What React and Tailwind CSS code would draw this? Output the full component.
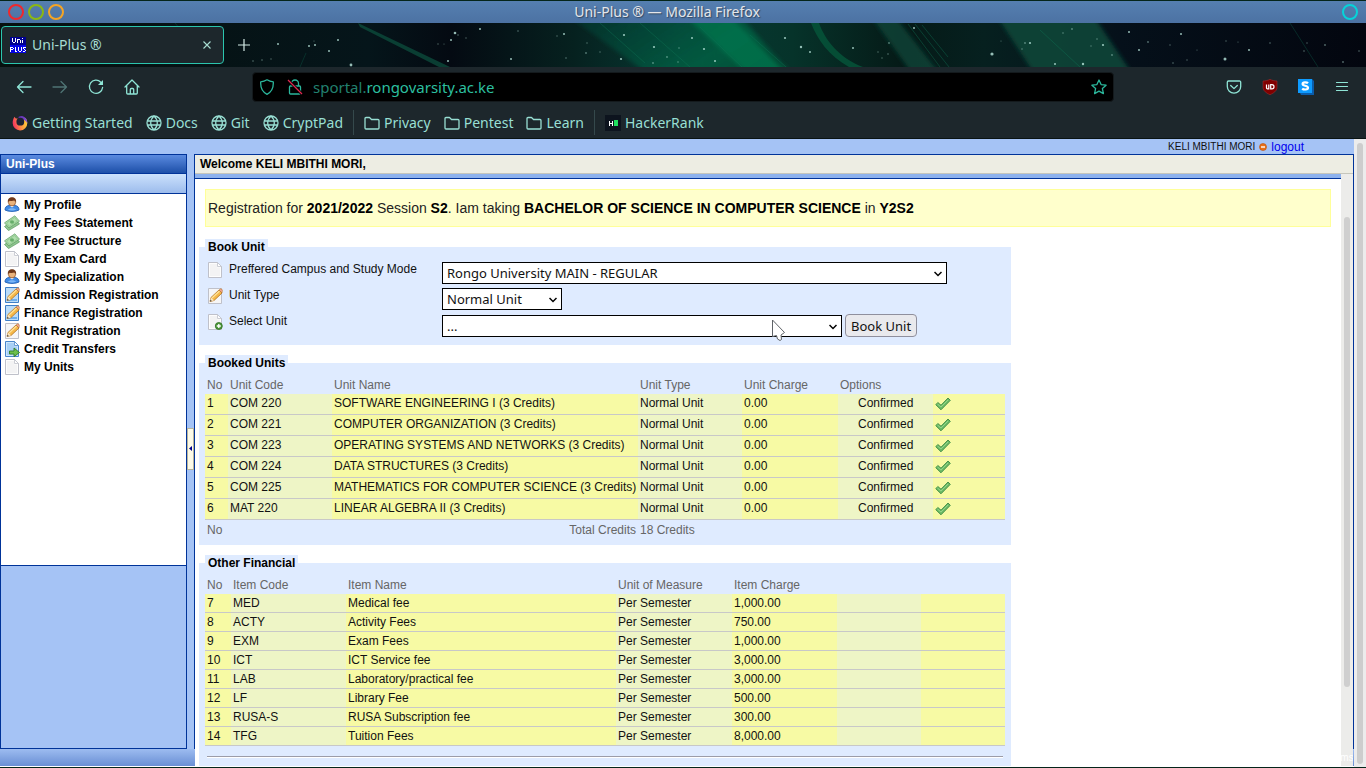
import React from 'react';

const UI = "font-['Noto_Sans',sans-serif]";

/* ---------- toolbar drawings ---------- */

function Wallpaper() {
  const stars = [
    [278, 44, 1], [309, 46, 1], [315, 45, 1], [314, 41, 0.6], [338, 40, 1], [329, 51, 1], [262, 60, 0.8], [271, 59, 0.7], [253, 61, 0.8], [351, 65, 1.4],
    [455, 33, 1.3], [458, 35, 0.8], [451, 40, 1], [466, 38, 0.7], [480, 29, 1], [438, 44, 0.7], [448, 61, 1], [444, 44, 0.6], [518, 31, 0.8], [511, 59, 1],
    [564, 34, 1], [557, 36, 0.7], [587, 43, 0.7], [586, 53, 0.9], [566, 58, 0.8], [600, 52, 0.7], [624, 35, 1.1], [621, 59, 1.1], [654, 47, 1.1], [667, 57, 0.9],
    [653, 63, 0.9], [678, 62, 0.8], [679, 48, 0.8], [692, 38, 1], [704, 49, 1.1], [715, 61, 1], [785, 38, 1.1], [801, 47, 1.2], [810, 52, 1], [853, 48, 1],
    [889, 43, 0.9], [878, 52, 0.7], [888, 54, 0.8], [882, 58, 0.7], [914, 28, 1], [992, 54, 1.6], [1001, 41, 0.6], [1025, 43, 0.9], [1030, 43, 1.1], [1022, 49, 0.8],
    [1063, 33, 0.8], [1072, 29, 0.9], [1055, 64, 1], [1083, 64, 1.2], [1097, 39, 0.8], [1103, 45, 1.1], [1091, 46, 0.7], [1112, 55, 0.9], [1129, 32, 1], [1139, 50, 1],
    [1148, 42, 0.9], [1170, 45, 0.7], [1181, 34, 1], [1197, 50, 0.6], [1225, 59, 1.5], [1226, 41, 0.7], [1238, 42, 0.6], [1249, 50, 1], [1270, 43, 0.8], [1304, 51, 0.8],
    [1307, 43, 0.7], [1325, 45, 0.9], [1343, 62, 0.9], [1359, 51, 0.8], [1173, 63, 0.8], [1187, 60, 0.7],
  ];
  return (
    <svg aria-hidden="true" className="absolute inset-0 h-full w-full" viewBox="0 23 1366 44" preserveAspectRatio="none">
      <defs>
        <linearGradient id="sky" x1="0" x2="1" y1="0" y2="0">
          <stop offset="0" stopColor="#06100f" />
          <stop offset="0.27" stopColor="#05151a" />
          <stop offset="0.33" stopColor="#040a12" />
          <stop offset="0.42" stopColor="#06211f" />
          <stop offset="0.5" stopColor="#073a34" />
          <stop offset="0.58" stopColor="#06332a" />
          <stop offset="0.66" stopColor="#051a17" />
          <stop offset="0.72" stopColor="#06201f" />
          <stop offset="0.82" stopColor="#05101a" />
          <stop offset="1" stopColor="#03060f" />
        </linearGradient>
        <linearGradient id="beam" x1="0" x2="1" y1="0" y2="0.4">
          <stop offset="0" stopColor="#0a4a3c" stopOpacity="0.4" />
          <stop offset="0.8" stopColor="#056544" />
          <stop offset="1" stopColor="#04583b" />
        </linearGradient>
        <filter id="soft" x="-10%" y="-30%" width="120%" height="160%">
          <feGaussianBlur stdDeviation="2" />
        </filter>
      </defs>
      <rect x="0" y="23" width="1366" height="44" fill="url(#sky)" />
      <path d="M358 23l92 44h-11l-79-40z" fill="#0d5340" opacity="0.7" />
      <g filter="url(#soft)">
        <path d="M567 15h172l54 60H650z" fill="url(#beam)" opacity="0.75" />
        <path d="M684 15h45l58 60h-38z" fill="#07774e" opacity="0.7" />
        <path d="M870 15h24l47 60h-28z" fill="#0a4a3c" opacity="0.7" />
        <path d="M996 15h97l40 60h-98z" fill="#09493b" opacity="0.85" />
      </g>
      <path d="M811 23c6 16 18 33 38 44h14c-24-9-38-27-44-44z" fill="#065a3c" opacity="0.75" />
      <path d="M922 25l26 32M908 24l32 43M915 24l34 43M1040 30l40 37M700 27l42 40M750 35l36 32M640 23l50 44M600 23l45 40" stroke="#107556" strokeWidth="1" opacity="0.4" />
      <path d="M300 67l6-14M175 23l5 6M1290 23l28 44" stroke="#0b4a3d" strokeWidth="1" opacity="0.5" />
      {stars.map(([x, y, r]) => (
        <circle key={x + '-' + y} cx={x} cy={y} r={r} fill="#b9e6dc" opacity={r > 0.9 ? 0.8 : 0.45} />
      ))}
    </svg>
  );
}

function Favicon() {
  return (
    <svg viewBox="0 0 16 16" className="h-4 w-4 shrink-0" shapeRendering="crispEdges" aria-hidden="true">
      <rect width="16" height="16" fill="#0404e6" />
      <rect width="16" height="8" fill="#000090" />
      <path d="M2 1h1v4h-1zM5 1h1v4h-1zM3 5h2v1h-2zM7 2h3v1h-3zM7 3h1v3h-1zM10 3h1v3h-1zM12 3h1v3h-1zM12 1h1v1h-1z" fill="#fff" />
      <path d="M0 10h3v1H0zM0 11h1v4H0zM3 11h1v1h-1zM1 12h2v1H1zM5 10h1v5h-1zM6 14h1v1h-1zM8 10h1v4h-1zM11 10h1v4h-1zM9 14h2v1h-2zM13 10h3v1h-3zM13 11h1v1h-1zM14 12h1v1h-1zM15 13h1v1h-1zM13 14h2v1h-2z" fill="#fff" />
    </svg>
  );
}

const line = { fill: 'none', stroke: 'currentColor', strokeLinecap: 'round', strokeLinejoin: 'round' };

function BackIcon({ flip }) {
  return (
    <svg viewBox="0 0 16 16" className={flip ? 'h-4 w-4 -scale-x-100' : 'h-4 w-4'} aria-hidden="true">
      <path d="M15 8H1.500M7 2.500L1.500 8 7 13.500" {...line} strokeWidth="1.300" />
    </svg>
  );
}
function ReloadIcon() {
  return (
    <svg viewBox="0 0 16 16" className="h-4 w-4" aria-hidden="true">
      <path d="M12.800 3.200A6.600 6.600 0 1 0 14.600 8.500" {...line} strokeWidth="1.300" />
      <path d="M15 1v5h-5z" fill="currentColor" />
    </svg>
  );
}
function HomeIcon() {
  return (
    <svg viewBox="0 0 16 16" className="h-4 w-4" aria-hidden="true">
      <path d="M1 8l7-7 7 7M2.700 6.500v7.500a1 1 0 0 0 1 1h8.600a1 1 0 0 0 1-1V6.500M6.300 15v-4.500a1 1 0 0 1 1-1h1.400a1 1 0 0 1 1 1V15" {...line} strokeWidth="1.300" />
    </svg>
  );
}
function ShieldIcon() {
  return (
    <svg viewBox="0 0 16 16" className="h-4 w-4" aria-hidden="true">
      <path d="M8 .800c2 1.300 4 1.900 6.300 2.100C14.600 8.500 12.800 13 8 15.300 3.200 13 1.400 8.500 1.700 2.900 4 2.700 6 2.100 8 .800z" {...line} strokeWidth="1.300" />
    </svg>
  );
}
function LockIcon() {
  return (
    <svg viewBox="0 0 16 16" className="h-4 w-4" aria-hidden="true">
      <path d="M4.500 7V4.500a3.500 3.500 0 0 1 7 0V7M3.500 7h9a1 1 0 0 1 1 1v6a1 1 0 0 1-1 1h-9a1 1 0 0 1-1-1V8a1 1 0 0 1 1-1z" {...line} strokeWidth="1.300" />
      <path d="M1 1l14 14" stroke="#000" strokeWidth="3" />
      <path d="M1 1l14 14" stroke="#e22850" strokeWidth="1.300" />
    </svg>
  );
}
function StarIcon() {
  return (
    <svg viewBox="0 0 16 16" className="h-4 w-4" aria-hidden="true">
      <path d="M8 1l2.100 4.600 5 .600-3.700 3.400 1 5L8 12.100 3.600 14.600l1-5L.900 6.200l5-.600z" {...line} strokeWidth="1.300" />
    </svg>
  );
}
function PocketIcon() {
  return (
    <svg viewBox="0 0 16 16" className="h-4 w-4" aria-hidden="true">
      <path d="M2.500 2h11a1.200 1.200 0 0 1 1.200 1.200V7.500a6.700 6.700 0 0 1-13.400 0V3.200A1.200 1.200 0 0 1 2.500 2zM4.700 6.500L8 9.600l3.300-3.100" {...line} strokeWidth="1.300" />
    </svg>
  );
}
function UblockIcon() {
  return (
    <svg viewBox="0 0 16 16" className="h-4 w-4" aria-hidden="true">
      <path d="M8 .300C10 1.400 12.500 2 15 2v6.500c0 3.500-3.500 5.500-7 7.300-3.500-1.800-7-3.800-7-7.300V2c2.500 0 5-.600 7-1.700z" fill="#800000" stroke="#a33" strokeWidth="0.500" />
      <path d="M4.500 5.500v3.300a1 1 0 0 0 1 1h1.300V5.500M8.700 9.800V5.600h1.200a2.100 2.100 0 0 1 0 4.200z" fill="none" stroke="#fff" strokeWidth="1.200" />
    </svg>
  );
}
function StylusIcon() {
  return (
    <svg viewBox="0 0 16 16" className="h-4 w-4" aria-hidden="true">
      <path d="M2 14h12V0l2 2v14H3z" fill="#0a5cab" />
      <rect width="14" height="14" fill="#0e9bff" />
      <path d="M10 4.300C9 3.200 4.600 2.800 4.600 5c0 2.200 5.400 1.300 5.400 3.800 0 2.300-4.500 2-5.800.800" fill="none" stroke="#fff" strokeWidth="2.200" />
    </svg>
  );
}
function MenuIcon() {
  return (
    <svg viewBox="0 0 16 16" className="h-4 w-4" aria-hidden="true">
      <path d="M2.500 3.500h11M2.500 7.500h11M2.500 11.500h11" {...line} strokeWidth="1.200" />
    </svg>
  );
}
function GlobeIcon() {
  return (
    <svg viewBox="0 0 16 16" className="h-4 w-4" aria-hidden="true">
      <path d="M8 1a7 7 0 1 0 0 14A7 7 0 0 0 8 1zM8 1C3.600 5 3.600 11 8 15M8 1c4.400 4 4.400 10 0 14M1.300 6h13.400M1.300 10h13.400" {...line} strokeWidth="1.300" />
    </svg>
  );
}
function FolderIcon() {
  return (
    <svg viewBox="0 0 16 16" className="h-4 w-4" aria-hidden="true">
      <path d="M2 2.500h3.500l2 2H14a1 1 0 0 1 1 1V13a1 1 0 0 1-1 1H2a1 1 0 0 1-1-1V3.500a1 1 0 0 1 1-1z" {...line} strokeWidth="1.300" />
    </svg>
  );
}
function FirefoxIcon() {
  return (
    <svg viewBox="0 0 16 16" className="h-4 w-4" aria-hidden="true">
      <defs>
        <linearGradient id="fx" x1="0.9" y1="0.5" x2="0.1" y2="0.7">
          <stop offset="0" stopColor="#ffc23a" />
          <stop offset="0.4" stopColor="#ff9640" />
          <stop offset="1" stopColor="#f63a5e" />
        </linearGradient>
        <linearGradient id="fxTop" x1="0" y1="0" x2="1" y2="1">
          <stop offset="0" stopColor="#5b2ea6" />
          <stop offset="1" stopColor="#8f55ea" />
        </linearGradient>
      </defs>
      <path d="M2.800 1.700C1.200 3.400.600 5.600.700 8.200a7.300 7.300 0 0 0 14.600-.200c0-2-.700-3.800-1.900-5.100L6.600 4c-.400-.400-1.200-.600-2.200-.400C3.500 3.400 3.100 2.900 2.800 1.700z" fill="url(#fx)" />
      <path d="M6.500 1.900C9.500-.300 15.500 2 15.300 8.500 14 5 11 3.500 6.600 4z" fill="url(#fxTop)" />
      <circle cx="8.300" cy="6.700" r="3.900" fill="#1d2333" />
    </svg>
  );
}
function HackerRankIcon() {
  return (
    <svg viewBox="0 0 16 16" className="h-4 w-4" shapeRendering="crispEdges" aria-hidden="true">
      <rect width="16" height="16" fill="#0d141e" />
      <path d="M4 6h1v5h-1zM7 6h1v5h-1zM5 8h2v1h-2z" fill="#fff" />
      <rect x="9" y="5" width="4" height="6" fill="#1fe05f" />
    </svg>
  );
}

/* ---------- portal drawings ---------- */

function PersonIcon() {
  return (
    <svg viewBox="0 0 16 16" className="h-4 w-4 shrink-0" aria-hidden="true">
      <path d="M1 13c0-2.800 1.500-4.300 4-4.500h6c2.500.200 4 1.700 4 4.500-3 1.900-11 1.900-14 0z" fill="#3f8ae6" stroke="#1f5fb4" strokeWidth="0.900" />
      <path d="M4 12.800c.500-2 7.500-2 8 0-2 1-6 1-8 0z" fill="#7db6f5" />
      <path d="M5.500 8.500L8 10.500l2.500-2z" fill="#fff" />
      <circle cx="8" cy="5.300" r="3.600" fill="#eab37c" stroke="#8a4a20" strokeWidth="0.700" />
      <path d="M3.900 5.600C3.400 1.800 5.500.300 8 .300s4.600 1.500 4.100 5.300c-.600-1.300-.900-1.800-1.800-2.100-1.500.600-3.200.600-4.700.200-.900.400-1.200.900-1.700 1.900z" fill="#71391a" />
    </svg>
  );
}
function MoneyIcon() {
  return (
    <svg viewBox="0 0 16 16" className="h-4 w-4 shrink-0" aria-hidden="true">
      <path d="M.500 11.500L11 4l4.500 5L4.500 15.600z" fill="#8ec58e" stroke="#5a9a60" strokeWidth="0.700" />
      <path d="M.500 7.800L10.800.800l4.700 5.400L5 13z" fill="#b0deac" stroke="#5a9a60" strokeWidth="0.700" />
      <path d="M2.500 8l8-5.500L13.600 6 5.300 11.400z" fill="none" stroke="#86c286" strokeWidth="0.700" />
      <ellipse cx="8" cy="7" rx="2" ry="1.800" fill="#66ad6a" />
    </svg>
  );
}
function Sheet({ tone }) {
  const blue = tone === 'blue';
  return (
    <>
      <path d="M1.500 .500h9l4 4v11h-13z" fill={blue ? '#cfe6fb' : '#fdfdfd'} stroke={blue ? '#4a86cc' : '#bfc1ca'} />
      <path d="M3 2h7v3.500h3V14H3z" fill={blue ? '#a9d0f5' : '#f3f3f4'} />
      <path d="M10.500 .500v4h4z" fill="#fff" stroke={blue ? '#4a86cc' : '#bfc1ca'} strokeWidth="0.800" />
    </>
  );
}
function PageIcon() {
  return (
    <svg viewBox="0 0 16 16" className="h-4 w-4 shrink-0" aria-hidden="true">
      <Sheet />
    </svg>
  );
}
function EditIcon({ tone }) {
  return (
    <svg viewBox="0 0 16 16" className="h-4 w-4 shrink-0" aria-hidden="true">
      <path d="M1.500 .500h13v15h-13z" fill={tone === 'blue' ? '#bcdcf8' : '#f6f6f7'} stroke={tone === 'blue' ? '#3f7fc8' : '#bfc1ca'} />
      {tone === 'blue' && <path d="M3 12h10v2H3z" fill="#6fb0ee" />}
      <path d="M3 13.500l1-4 8-7.500 3 3-8 7.500z" fill="#f6b94a" stroke="#b06f1c" strokeWidth="0.800" />
      <path d="M5 10l7.500-7" stroke="#ffe39a" strokeWidth="1.200" />
      <path d="M12 2l1.200-1.100c1-.600 2.800 1 2.100 2.200L15 5z" fill="#f0a58f" stroke="#b06f1c" strokeWidth="0.500" />
      <path d="M3 13.500l1-4L7 12.500z" fill="#f9e6c4" />
      <path d="M3 13.500l.500-1.700 1.300 1.200z" fill="#333" />
    </svg>
  );
}
function PageAddIcon() {
  return (
    <svg viewBox="0 0 16 16" className="h-4 w-4 shrink-0" aria-hidden="true">
      <Sheet />
      <circle cx="11.800" cy="12" r="3.500" fill="#4f9a3a" stroke="#2f6f22" strokeWidth="0.800" />
      <path d="M11.800 10v4M9.800 12h4" stroke="#fff" strokeWidth="1.300" />
    </svg>
  );
}
function PageGoIcon() {
  return (
    <svg viewBox="0 0 16 16" className="h-4 w-4 shrink-0" aria-hidden="true">
      <Sheet tone="blue" />
      <path d="M5.500 10h4.500V7l5.500 4.500L10 15.700V13H5.500z" fill="#6cbf4b" stroke="#2f7d28" strokeWidth="0.900" />
    </svg>
  );
}
function TickIcon() {
  return (
    <svg viewBox="0 0 16 16" className="h-4 w-4" role="img" aria-label="Confirmed">
      <path d="M.800 8.700l2-2.200L6 9.200 13 2l2.300 2.300L6 13.800z" fill="#6cbc64" stroke="#3b8a44" strokeWidth="0.900" strokeLinejoin="round" />
      <path d="M2.500 8l3.500 3L13 4" fill="none" stroke="#a0dc95" strokeWidth="0.800" />
    </svg>
  );
}
function Chevron() {
  return (
    <svg viewBox="0 0 8 6" className="pointer-events-none absolute top-[9px] right-[5px] h-1.5 w-2" aria-hidden="true">
      <path d="M.500 1L4 4.500 7.500 1" fill="none" stroke="#000" strokeWidth="1.500" />
    </svg>
  );
}

/* ---------- data ---------- */

const bookmarks = [
  [['Getting Started', FirefoxIcon], ['Docs', GlobeIcon], ['Git', GlobeIcon], ['CryptPad', GlobeIcon]],
  [['Privacy', FolderIcon], ['Pentest', FolderIcon], ['Learn', FolderIcon]],
  [['HackerRank', HackerRankIcon]],
];

const menu = [
  ['My Profile', <PersonIcon />],
  ['My Fees Statement', <MoneyIcon />],
  ['My Fee Structure', <MoneyIcon />],
  ['My Exam Card', <PageIcon />],
  ['My Specialization', <PersonIcon />],
  ['Admission Registration', <EditIcon tone="blue" />],
  ['Finance Registration', <EditIcon tone="blue" />],
  ['Unit Registration', <EditIcon />],
  ['Credit Transfers', <PageGoIcon />],
  ['My Units', <PageIcon />],
];

const units = [
  ['COM 220', 'SOFTWARE ENGINEERING I (3 Credits)'],
  ['COM 221', 'COMPUTER ORGANIZATION (3 Credits)'],
  ['COM 223', 'OPERATING SYSTEMS AND NETWORKS (3 Credits)'],
  ['COM 224', 'DATA STRUCTURES (3 Credits)'],
  ['COM 225', 'MATHEMATICS FOR COMPUTER SCIENCE (3 Credits)'],
  ['MAT 220', 'LINEAR ALGEBRA II (3 Credits)'],
];

const fees = [
  ['MED', 'Medical fee', '1,000.00'],
  ['ACTY', 'Activity Fees', '750.00'],
  ['EXM', 'Exam Fees', '1,000.00'],
  ['ICT', 'ICT Service fee', '3,000.00'],
  ['LAB', 'Laboratory/practical fee', '3,000.00'],
  ['LF', 'Library Fee', '500.00'],
  ['RUSA-S', 'RUSA Subscription fee', '300.00'],
  ['TFG', 'Tuition Fees', '8,000.00'],
];

/* ---------- browser window ---------- */

function TitleBar() {
  return (
    <header className="mt-px grid h-[22px] shrink-0 grid-cols-[1fr_auto_1fr] items-center bg-linear-to-b from-[#557fb0] to-[#4c72a3] px-2">
      <div className="flex gap-1">
        <button aria-label="Close window" className="h-4 w-4 rounded-full border-2 border-[#f0282c]" />
        <button aria-label="Minimize window" className="h-4 w-4 rounded-full border-2 border-[#8cb811]" />
        <button aria-label="Maximize window" className="h-4 w-4 rounded-full border-2 border-[#f5a524]" />
      </div>
      <h1 className="mr-8 text-sm leading-5 text-[#e4e6ea] [text-shadow:1px_1px_1px_#33475f]">Uni-Plus ® — Mozilla Firefox</h1>
      <button aria-label="Window menu" className="h-4 w-4 justify-self-end rounded-full border-2 border-[#06d3da]" />
    </header>
  );
}

function TabStrip() {
  return (
    <div className="relative h-11 shrink-0 bg-[#050f14]">
      <Wallpaper />
      <div className="relative flex h-full items-center px-px">
        <div className="flex h-[38px] w-[223px] items-center rounded border border-[#2bc5ae] bg-[#1d272c] px-2 text-[#a8ddd2]">
          <Favicon />
          <span className="ml-1.5 flex-1 text-sm">Uni-Plus ®</span>
          <button aria-label="Close tab" className="flex h-4 w-4 items-center justify-center">
            <svg viewBox="0 0 8 8" className="h-2 w-2" aria-hidden="true"><path d="M.500 .500l7 7M7.500 .500l-7 7" stroke="currentColor" strokeWidth="1.100" /></svg>
          </button>
        </div>
        <button aria-label="New tab" className="ml-3 flex h-4 w-4 items-center justify-center text-[#d4ebe6]">
          <svg viewBox="0 0 12 12" className="h-3 w-3" aria-hidden="true"><path d="M6 0v12M0 6h12" stroke="currentColor" strokeWidth="1.200" /></svg>
        </button>
      </div>
    </div>
  );
}

function Toolbar() {
  return (
    <nav className="flex h-10 shrink-0 items-center bg-[#1d272c] px-4 text-[#8fe5d6]">
      <div className="flex w-[236px] gap-5">
        <button aria-label="Back"><BackIcon /></button>
        <button aria-label="Forward" className="text-[#4f7474]"><BackIcon flip /></button>
        <button aria-label="Reload"><ReloadIcon /></button>
        <button aria-label="Home"><HomeIcon /></button>
      </div>
      <div className="flex h-[30px] flex-1 items-center rounded border border-[#141a1d] bg-black px-1.5 text-[#2bb79c]">
        <ShieldIcon />
        <span className="ml-3"><LockIcon /></span>
        <a href="#address" className="ml-2.5 flex-1 text-[15px] leading-5 text-[#22806f]">sportal.<span className="text-[#2cbf9f]">rongovarsity.ac.ke</span></a>
        <button aria-label="Bookmark this page"><StarIcon /></button>
      </div>
      <div className="flex w-[236px] justify-end gap-5">
        <button aria-label="Save to Pocket"><PocketIcon /></button>
        <button aria-label="uBlock"><UblockIcon /></button>
        <button aria-label="Stylus"><StylusIcon /></button>
        <button aria-label="Open menu"><MenuIcon /></button>
      </div>
    </nav>
  );
}

function Bookmarks() {
  return (
    <nav className="flex h-[31px] shrink-0 items-center gap-2.5 bg-[#1d272c] px-3 text-[#98dfd3]">
      {bookmarks.map((group, i) => (
        <React.Fragment key={i}>
          {i > 0 && <span className="h-[25px] w-px bg-[#35494c]" />}
          <ul className="flex gap-[13px]">
            {group.map(([name, Icon]) => (
              <li key={name}>
                <a href="#bookmark" className="flex items-center gap-1 text-sm"><Icon />{name}</a>
              </li>
            ))}
          </ul>
        </React.Fragment>
      ))}
    </nav>
  );
}

/* ---------- portal ---------- */

function Sidebar() {
  return (
    <aside className="flex w-[195px] shrink-0 flex-col">
      <div className="flex min-h-0 flex-1">
        <div className="flex w-[187px] flex-col border border-[#003399]">
          <h2 className="h-[19px] border-b border-[#003399] bg-linear-to-b from-[#5b8be0] to-[#1c4fa8] pl-[5px] text-xs leading-[18px] font-bold text-white">Uni-Plus</h2>
          <div className="h-5 border-b border-[#003399] bg-linear-to-b from-[#cbe1fc] to-[#9dbcec]" />
          <ul className="min-h-[372px] border-b border-[#003399] bg-white pt-0.5">
            {menu.map(([name, icon]) => (
              <li key={name}>
                <a href="#menu" className="flex h-[18px] items-center gap-1 pl-[3px] text-xs font-bold text-black">{icon}{name}</a>
              </li>
            ))}
          </ul>
        </div>
        <div className="flex flex-1 items-center border-r border-[#003399] pb-1.5">
          <button aria-label="Collapse menu" className="flex h-[42px] w-full items-center justify-center border border-[#b8b49c] bg-[#fdfbe8]">
            <svg viewBox="0 0 3 5" className="h-[5px] w-[3px]" aria-hidden="true"><path d="M3 0v5L0 2.500z" fill="#00008b" /></svg>
          </button>
        </div>
      </div>
      <div className="h-[17px] shrink-0 bg-linear-to-b from-[#9dbcf0] to-[#6a8fd4]" />
    </aside>
  );
}

function Panel({ title, children }) {
  return (
    <fieldset className="w-[812px] bg-[#dfebff] px-1.5">
      <legend className="bg-[#dfebff] px-[3px] text-xs font-bold text-black">{title}</legend>
      {children}
    </fieldset>
  );
}

const selectClass = "h-[22px] w-full appearance-none border border-black bg-white pr-5 pl-1 text-[13px] leading-5 text-[#111] font-['Noto_Sans',sans-serif]";

function BookUnit() {
  return (
    <Panel title="Book Unit">
      <div className="grid grid-cols-[16px_207px_1fr] gap-x-1.5 pt-[7px] pb-2 pl-0.5">
        <PageIcon />
        <label htmlFor="campus" className="h-[26px] leading-[14px]">Preffered Campus and Study Mode</label>
        <div className="relative w-[505px]">
          <select id="campus" className={selectClass}><option>Rongo University MAIN - REGULAR</option></select>
          <Chevron />
        </div>
        <EditIcon />
        <label htmlFor="type" className="h-[26px] leading-[14px]">Unit Type</label>
        <div className="relative w-[120px]">
          <select id="type" className={selectClass}><option>Normal Unit</option></select>
          <Chevron />
        </div>
        <PageAddIcon />
        <label htmlFor="unit" className="leading-[14px]">Select Unit</label>
        <div className="flex items-end gap-[3px]">
          <div className="relative w-[400px]">
            <select id="unit" className={selectClass}><option>...</option></select>
            <Chevron />
            <svg viewBox="0 0 16 24" className="pointer-events-none absolute top-1 left-[329px] h-6 w-4" aria-hidden="true">
              <path d="M1.500 1v16.500l4-1 1 3.500 2.500 1.500 1.500-1-.500-4.500 3.500-2.500z" fill="#fff" stroke="#5f6368" strokeWidth="1" strokeLinejoin="round" />
            </svg>
          </div>
          <button className="h-[23px] rounded border border-[#8f8f9d] bg-[#e9e9ed] px-[5px] font-['Noto_Sans',sans-serif] text-[13px] leading-5 text-[#111]">Book Unit</button>
        </div>
      </div>
    </Panel>
  );
}

const pale = 'border-b border-[#c8c8c8] bg-[#eef5c6]';
const strong = 'border-b border-[#c8c8c8] bg-[#f7faa4]';

function Cols({ list }) {
  return <colgroup>{list.map((c, i) => <col key={i} className={c} />)}</colgroup>;
}

function Head({ names }) {
  return (
    <thead>
      <tr className="h-[18px] text-left text-[#666]">
        {names.map((n) => <th key={n} className="px-0.5 font-normal">{n}</th>)}
        <td colSpan={7 - names.length} />
      </tr>
    </thead>
  );
}

function BookedUnits() {
  return (
    <Panel title="Booked Units">
      <div className="pt-[5px] pb-1.5">
        <table className="w-full table-fixed border-separate border-spacing-0 leading-4">
          <Cols list={['w-[23px]', 'w-[104px]', 'w-[306px]', 'w-[104px]', 'w-[96px]', 'w-[95px]', 'w-[72px]']} />
          <Head names={['No', 'Unit Code', 'Unit Name', 'Unit Type', 'Unit Charge', 'Options']} />
          <tbody>
            {units.map(([code, name], i) => (
              <tr key={code} className="h-[21px] align-top whitespace-nowrap">
                <td className={`px-0.5 pt-px ${strong}`}>{i + 1}</td>
                <td className={`px-0.5 pt-px ${pale}`}>{code}</td>
                <td className={`px-0.5 pt-px ${strong}`}>{name}</td>
                <td className={`px-0.5 pt-px ${pale}`}>Normal Unit</td>
                <td className={`px-0.5 pt-px ${strong}`}>0.00</td>
                <td className={`pt-px pl-5 ${pale}`}>Confirmed</td>
                <td className={`pt-0.5 pl-0.5 ${strong}`}><TickIcon /></td>
              </tr>
            ))}
          </tbody>
          <tfoot>
            <tr className="h-[19px] text-[#666]">
              <td className="px-0.5">No</td>
              <td />
              <td className="px-0.5 text-right">Total Credits</td>
              <td className="px-0.5">18 Credits</td>
              <td colSpan={3} />
            </tr>
          </tfoot>
        </table>
      </div>
    </Panel>
  );
}

function OtherFinancial() {
  return (
    <Panel title="Other Financial">
      <div className="pt-[5px] pb-10">
        <table className="w-full table-fixed border-separate border-spacing-0 leading-4">
          <Cols list={['w-[26px]', 'w-[115px]', 'w-[270px]', 'w-[116px]', 'w-[105px]', 'w-[84px]', 'w-[84px]']} />
          <Head names={['No', 'Item Code', 'Item Name', 'Unit of Measure', 'Item Charge']} />
          <tbody>
            {fees.map(([code, name, charge], i) => (
              <tr key={code} className="h-[19px] whitespace-nowrap">
                <td className={`px-0.5 ${strong}`}>{i + 7}</td>
                <td className={`px-0.5 ${pale}`}>{code}</td>
                <td className={`px-0.5 ${strong}`}>{name}</td>
                <td className={`px-0.5 ${pale}`}>Per Semester</td>
                <td className={`px-0.5 ${strong}`}>{charge}</td>
                <td className={pale} />
                <td className={strong} />
              </tr>
            ))}
          </tbody>
        </table>
        <hr className="mx-0.5 mt-2.5 h-0.5 border-t border-b border-t-[#9c9ca8] border-b-white" />
      </div>
    </Panel>
  );
}

function Portal() {
  return (
    <div className="flex min-h-0 flex-1 bg-[#ececec] font-['Liberation_Sans',Arial,sans-serif] text-xs text-[#111]">
      <div className="flex min-w-0 flex-1 flex-col bg-white pb-px">
        <div className="flex h-[15px] shrink-0 items-center justify-end gap-1 bg-[#a5c3f5] pr-[50px]">
          <span className="text-[10px]">KELI MBITHI MORI</span>
          <svg viewBox="0 0 8 8" className="h-2 w-2" aria-hidden="true">
            <circle cx="4" cy="4" r="3.500" fill="#e8701a" stroke="#b84e0c" strokeWidth="0.600" />
            <path d="M2 4h4" stroke="#fff" strokeWidth="1.400" />
          </svg>
          <a href="#logout" className="text-xs text-[#0000ee]">logout</a>
        </div>
        <div className="flex min-h-0 flex-1 bg-[#a5c3f5]">
          <Sidebar />
          <main className="flex min-w-0 flex-1 flex-col border-t border-[#003399] bg-white">
            <h2 className="h-[19px] shrink-0 border-b border-[#c6c6bc] bg-[#edede3] pl-[5px] text-xs leading-[18px] font-bold text-black">Welcome KELI MBITHI MORI,</h2>
            <div className="flex min-h-0 flex-1">
              <div className="min-w-0 flex-1 overflow-hidden">
                <div className="h-[5px] border-b border-[#003399] bg-[#8db2ee]" />
                <div className="flex flex-col pt-2.5 pl-1">
                  <p className="mr-2.5 mb-3 ml-1.5 border border-[#ffff99] bg-[#ffffcc] px-0.5 py-2 text-sm leading-5 text-[#222]">
                    Registration for <b className="text-black">2021/2022</b> Session <b className="text-black">S2</b>. Iam taking{' '}
                    <b className="text-black">BACHELOR OF SCIENCE IN COMPUTER SCIENCE</b> in <b className="text-black">Y2S2</b>
                  </p>
                  <div className="flex flex-col gap-2.5">
                    <BookUnit />
                    <BookedUnits />
                    <OtherFinancial />
                  </div>
                </div>
              </div>
              <div className="flex w-3 shrink-0 flex-col items-center bg-[#ececea] pt-[43px]">
                <span className="h-[470px] w-1.5 shrink-0 rounded-full bg-[#cfcfcf]" />
                <span className="mt-auto text-[10px] leading-4 text-white">ms</span>
              </div>
            </div>
          </main>
          <div className="flex w-px flex-col">
            <div className="flex-1 bg-[#003399]" />
            <div className="h-[17px] bg-linear-to-b from-[#9dbcf0] to-[#6a8fd4]" />
          </div>
        </div>
      </div>
      <div className="flex w-3 shrink-0 justify-center pt-1 pb-[3px]">
        <span className="w-1.5 rounded-full bg-[#cdcdcd]" />
      </div>
    </div>
  );
}

export default function App() {
  return (
    <div className={`flex h-screen flex-col overflow-hidden bg-[#05251a] pb-px ${UI}`}>
      <TitleBar />
      <TabStrip />
      <Toolbar />
      <Bookmarks />
      <div className="h-px shrink-0 bg-[#0a1414]" />
      <Portal />
    </div>
  );
}
